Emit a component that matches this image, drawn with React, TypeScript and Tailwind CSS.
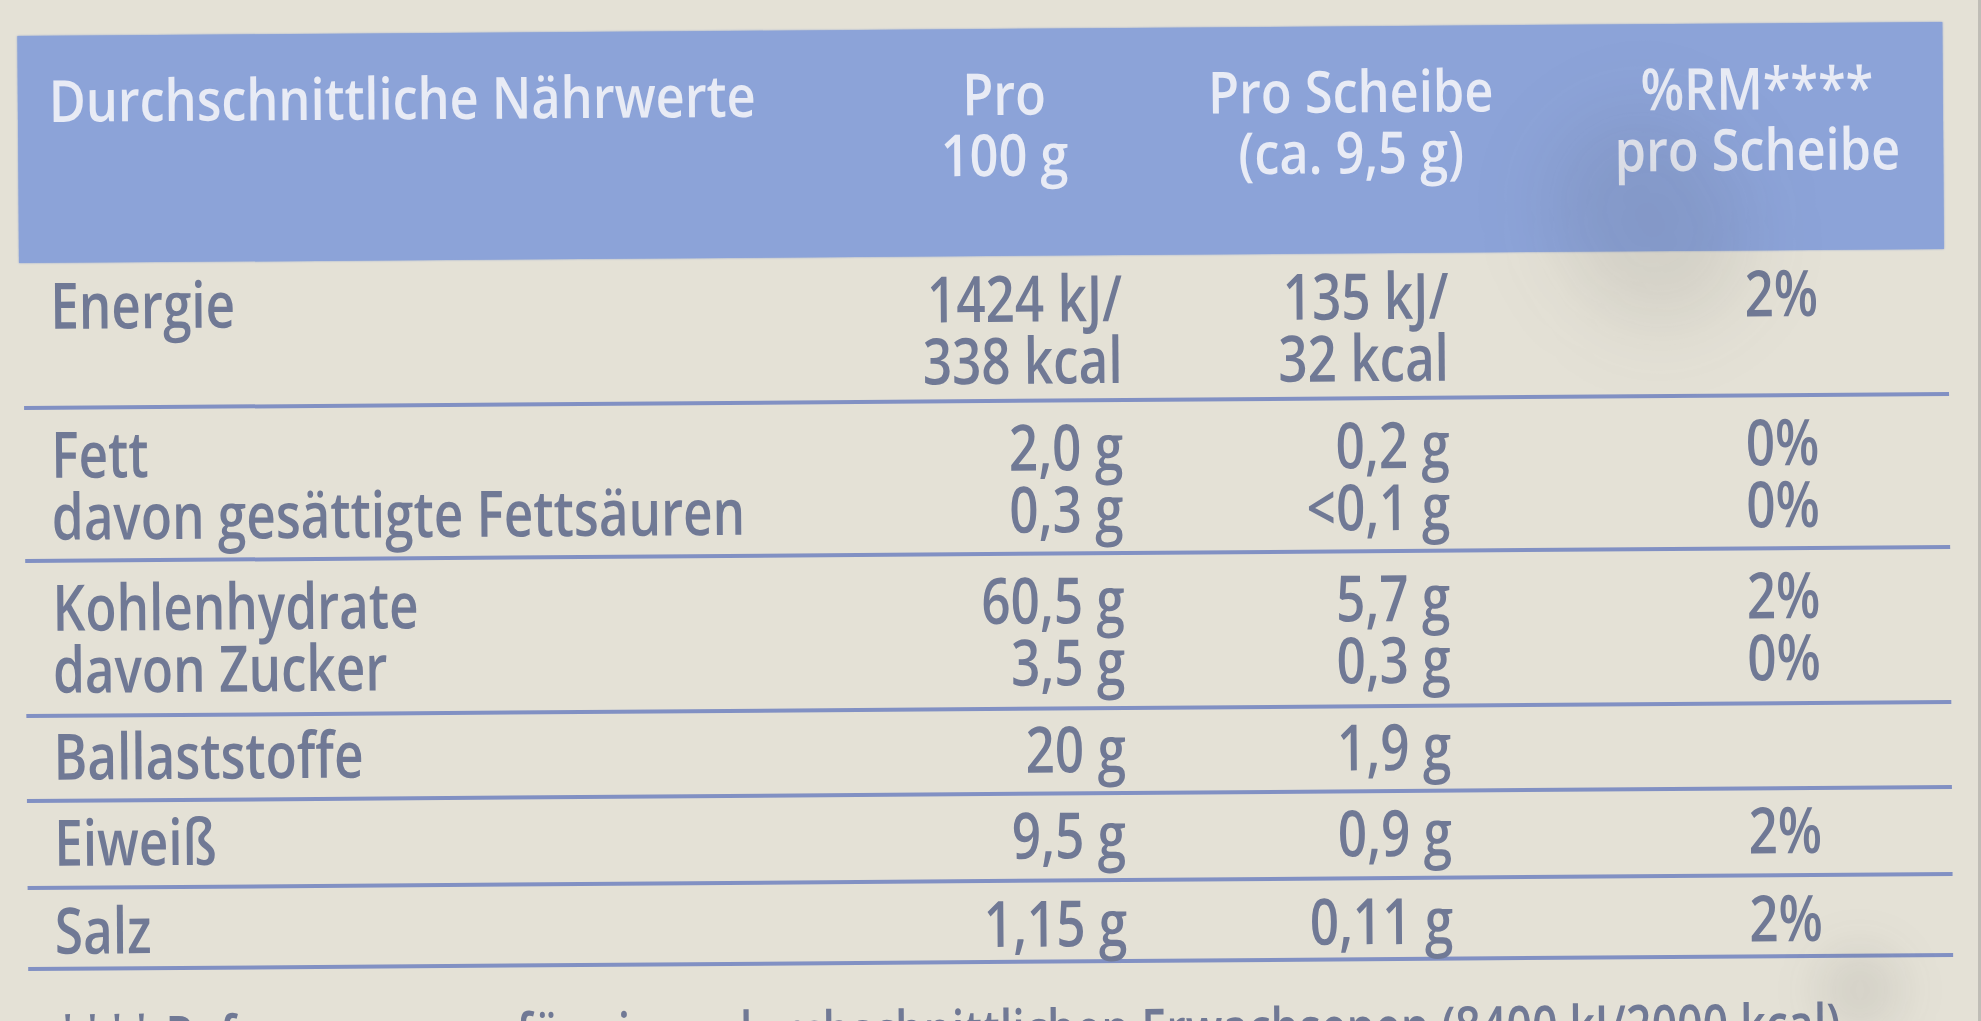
const font = { fontFamily: '"Open Sans", "Noto Sans", sans-serif' }

interface Row {
  label: string[]
  per100: string[]
  perSlice: string[]
  rm: string[]
  h: string
  pt: string
}

const rows: Row[] = [
  { label: ['Energie'], per100: ['1424 kJ/', '338 kcal'], perSlice: ['135 kJ/', '32 kcal'], rm: ['2%'], h: 'h-[147px]', pt: 'pt-[11px]' },
  { label: ['Fett', 'davon gesättigte Fettsäuren'], per100: ['2,0 g', '0,3 g'], perSlice: ['0,2 g', '<0,1 g'], rm: ['0%', '0%'], h: 'h-[153px]', pt: 'pt-[13px]' },
  { label: ['Kohlenhydrate', 'davon Zucker'], per100: ['60,5 g', '3,5 g'], perSlice: ['5,7 g', '0,3 g'], rm: ['2%', '0%'], h: 'h-[155px]', pt: 'pt-[13px]' },
  { label: ['Ballaststoffe'], per100: ['20 g'], perSlice: ['1,9 g'], rm: [], h: 'h-[85px]', pt: 'pt-[7px]' },
  { label: ['Eiweiß'], per100: ['9,5 g'], perSlice: ['0,9 g'], rm: ['2%'], h: 'h-[87px]', pt: 'pt-[8px]' },
  { label: ['Salz'], per100: ['1,15 g'], perSlice: ['0,11 g'], rm: ['2%'], h: 'h-[81px]', pt: 'pt-[9px]' },
]

function Lines({ lines, align }: { lines: string[]; align: 'left' | 'right' }) {
  return (
    <div className={align === 'left' ? 'text-left' : 'text-right'}>
      <span
        className={`inline-block scale-x-[0.8] ${align === 'left' ? 'origin-left' : 'origin-right'}`}
      >
        {lines.map((l) => (
          <div key={l} className="whitespace-nowrap">
            {l}
          </div>
        ))}
      </span>
    </div>
  )
}

function HeadCell({ lines, align }: { lines: string[]; align: 'left' | 'center' }) {
  return (
    <div className={align === 'left' ? 'text-left pl-[31px]' : 'text-center'}>
      <span
        className={`inline-block scale-x-[0.87] ${align === 'left' ? 'origin-left' : 'origin-center'}`}
      >
        {lines.map((l) => (
          <div key={l} className="whitespace-nowrap">
            {l}
          </div>
        ))}
      </span>
    </div>
  )
}

export default function App() {
  return (
    <div
      className="relative w-[1981px] h-[1021px] overflow-hidden bg-[#e4e1d6] border-r-[3px] border-[#bfbdb6]"
      style={font}
    >
      <div className="rotate-[-0.42deg] pt-[29px] pl-[21px]">
        {/* header */}
        <div className="w-[1925px] h-[227px] bg-[#8ca3d8] pt-[33px] grid grid-cols-[859px_254px_440px_372px] text-[58px] leading-[61px] font-semibold text-[#e8ebf5] shadow-[0_0_2px_#8199cf]">
          <HeadCell lines={['Durchschnittliche Nährwerte']} align="left" />
          <HeadCell lines={['Pro', '100 g']} align="center" />
          <HeadCell lines={['Pro Scheibe', '(ca. 9,5 g)']} align="center" />
          <HeadCell lines={['%RM****', 'pro Scheibe']} align="center" />
        </div>

        {/* body */}
        <div className="ml-[4px] w-[1925px] text-[64px] leading-[62px] font-semibold text-[#707995]">
          {rows.map((r) => (
            <div
              key={r.label[0]}
              className={`grid grid-cols-[825px_274px_326px_370px] border-b-4 border-[#8190c3] ${r.h} ${r.pt}`}
            >
              <div className="pl-[27px]">
                <Lines lines={r.label} align="left" />
              </div>
              <Lines lines={r.per100} align="right" />
              <Lines lines={r.perSlice} align="right" />
              <Lines lines={r.rm} align="right" />
            </div>
          ))}
          <div className="mt-[33px] pl-[27px] text-[56px] leading-[62px]">
            <span className="inline-block scale-x-[0.8] origin-left whitespace-nowrap">
              **** Referenzmenge für einen durchschnittlichen Erwachsenen (8400 kJ/2000 kcal)
            </span>
          </div>
        </div>
      </div>

      {/* smudges on the packaging */}
      <div className="absolute left-[1560px] top-[110px] w-[180px] h-[220px] rounded-full bg-[#3a3a3a]/10 blur-2xl rotate-[-30deg]" />
      <div className="absolute left-[1820px] top-[950px] w-[80px] h-[80px] rounded-full bg-[#3a3a3a]/10 blur-xl" />
    </div>
  )
}
